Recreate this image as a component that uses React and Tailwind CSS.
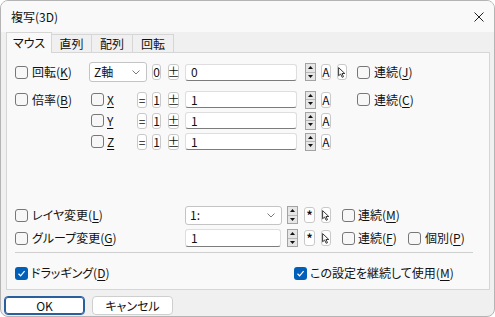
import React from 'react';

const font = "font-['Noto_Sans_CJK_JP','Noto_Sans',sans-serif] [font-feature-settings:'palt']";

function Check({ checked }) {
  if (checked) {
    return (
      <span className="w-[13px] h-[13px] shrink-0 rounded-[3px] bg-[#005fb8] flex items-center justify-center">
        <svg width="9" height="9" viewBox="0 0 9 9">
          <path d="M1.5 4.8 L3.6 6.8 L7.6 2.2" fill="none" stroke="white" strokeWidth="1.2" />
        </svg>
      </span>
    );
  }
  return <span className="w-[13px] h-[13px] shrink-0 rounded-[3px] border border-[#777777] bg-[#f7f7f7]" />;
}

function Label({ text, k }) {
  return (
    <span className="whitespace-nowrap leading-[14px]">
      {text}
      {k && (
        <>
          (<u className="underline underline-offset-2 decoration-1">{k}</u>)
        </>
      )}
    </span>
  );
}

function CheckLabel({ checked, text, k, gap = 'gap-[4px]', className = '' }) {
  return (
    <div className={`flex items-center ${gap} ${className}`}>
      <Check checked={checked} />
      <Label text={text} k={k} />
    </div>
  );
}

function Mini({ children, className = '' }) {
  return (
    <div className={`h-[16px] shrink-0 rounded-[3px] border border-[#c9c9c9] bg-white flex items-center justify-center text-[12px] leading-none ${className}`}>
      {children}
    </div>
  );
}

function Spin({ className = '' }) {
  return (
    <div className={`w-[11px] h-[18px] shrink-0 flex flex-col border border-[#a3a3a3] bg-[#e6e6e6] ${className}`}>
      <div className="flex-1 flex items-center justify-center border-b border-[#b8b8b8]">
        <svg width="5" height="3" viewBox="0 0 5 3"><path d="M0 3 L2.5 0 L5 3 Z" fill="#111" /></svg>
      </div>
      <div className="flex-1 flex items-center justify-center">
        <svg width="5" height="3" viewBox="0 0 5 3"><path d="M0 0 L2.5 3 L5 0 Z" fill="#111" /></svg>
      </div>
    </div>
  );
}

function Pointer({ className = '' }) {
  return (
    <div className={`w-[10px] h-[16px] shrink-0 rounded-[3px] border border-[#c9c9c9] bg-white flex items-center justify-center ${className}`}>
      <svg width="8" height="11" viewBox="0 0 8 11">
        <path d="M0.6 0.6 L0.6 8.8 L2.6 7 L4.2 10.3 L5.5 9.7 L4 6.5 L6.8 6.5 Z" fill="white" stroke="#222" strokeWidth="0.9" strokeLinejoin="round" />
      </svg>
    </div>
  );
}

function TextBox({ value, className = '' }) {
  return (
    <div className={`h-[17px] shrink-0 bg-white rounded-[3px] border border-[#dedede] border-b-[#7c7c7c] flex items-center pl-[5px] text-[12px] leading-none ${className}`}>
      {value}
    </div>
  );
}

function Combo({ value, className = '' }) {
  return (
    <div className={`shrink-0 bg-white rounded-[3px] border border-[#c4c4c4] flex items-center justify-between pl-[4px] pr-[6px] leading-none ${className}`}>
      <span>{value}</span>
      <svg width="8" height="5" viewBox="0 0 8 5"><path d="M0.5 0.5 L4 4 L7.5 0.5" fill="none" stroke="#6b6b6b" strokeWidth="0.9" /></svg>
    </div>
  );
}

function AxisRow({ first, axis }) {
  return (
    <div className="flex items-center h-[21px]">
      <div className="w-[76px] shrink-0">
        {first && <CheckLabel text="倍率" k="B" />}
      </div>
      <div className="w-[46px] shrink-0 flex items-center gap-[3px]">
        <Check />
        <u className="underline underline-offset-2 decoration-1 leading-[14px]">{axis}</u>
      </div>
      <Mini className="w-[10px]">=</Mini>
      <Mini className="w-[9px] ml-[5px]">1</Mini>
      <Mini className="w-[11px] ml-[7px]">±</Mini>
      <TextBox value="1" className="w-[112px] ml-[6px]" />
      <Spin className="ml-[8px]" />
      <Mini className="w-[10px] ml-[5px]">A</Mini>
      {first && <CheckLabel text="連続" k="C" className="ml-[26px]" />}
    </div>
  );
}

export default function App() {
  return (
    <div className={`w-[495px] h-[317px] bg-[#f0f0f0] border border-[#b4b4b4] rounded-[8px] overflow-hidden text-[12px] text-[#111] ${font}`}>
      {/* title bar */}
      <div className="h-[31px] bg-[#f9f9f9] flex items-center justify-between pl-[10px] pr-[10px]">
        <span className="text-[12px]">複写(3D)</span>
        <svg width="10" height="10" viewBox="0 0 10 10">
          <path d="M0.5 0.5 L9.5 9.5 M9.5 0.5 L0.5 9.5" stroke="#222" strokeWidth="1" />
        </svg>
      </div>

      {/* tabs */}
      <div className="h-[20px] flex items-end ml-[5px]">
        <div className="relative z-10 -mb-px h-[21px] w-[46px] bg-[#f9f9f9] border border-b-0 border-[#d6d6d6] flex items-center justify-center">マウス</div>
        <div className="h-[18px] w-[40px] border-t border-r border-[#d6d6d6] flex items-center justify-center">直列</div>
        <div className="h-[18px] w-[41px] border-t border-r border-[#d6d6d6] flex items-center justify-center">配列</div>
        <div className="h-[18px] w-[41px] border-t border-r border-[#d6d6d6] flex items-center justify-center">回転</div>
      </div>

      {/* panel */}
      <div className="ml-[5px] w-[484px] h-[238px] border border-[#d6d6d6] bg-[#f9f9f9] pl-[8px] pt-[9px]">
        <div className="flex items-center h-[20px]">
          <CheckLabel text="回転" k="K" className="w-[74px] shrink-0" />
          <Combo value="Z軸" className="w-[58px] h-[20px]" />
          <Mini className="w-[9px] ml-[5px]">0</Mini>
          <Mini className="w-[11px] ml-[7px]">±</Mini>
          <TextBox value="0" className="w-[112px] ml-[6px]" />
          <Spin className="ml-[8px]" />
          <Mini className="w-[10px] ml-[5px]">A</Mini>
          <Pointer className="ml-[6px]" />
          <CheckLabel text="連続" k="J" className="ml-[10px]" />
        </div>

        <div className="mt-[7px]">
          <AxisRow first axis="X" />
          <AxisRow axis="Y" />
          <AxisRow axis="Z" />
        </div>

        <div className="flex items-center h-[20px] mt-[53px]">
          <CheckLabel text="レイヤ変更" k="L" className="w-[170px] shrink-0" />
          <Combo value="1:" className="w-[97px] h-[19px]" />
          <Spin className="ml-[5px]" />
          <Mini className="w-[11px] ml-[6px] font-bold">*</Mini>
          <Pointer className="ml-[6px]" />
          <CheckLabel text="連続" k="M" gap="gap-[3px]" className="ml-[11px]" />
        </div>

        <div className="flex items-center h-[20px] mt-[3px]">
          <CheckLabel text="グループ変更" k="G" className="w-[170px] shrink-0" />
          <TextBox value="1" className="w-[96px] h-[18px]" />
          <Spin className="ml-[6px]" />
          <Mini className="w-[11px] ml-[6px] font-bold">*</Mini>
          <Pointer className="ml-[6px]" />
          <CheckLabel text="連続" k="F" gap="gap-[3px]" className="ml-[11px] w-[66px] shrink-0" />
          <CheckLabel text="個別" k="P" />
        </div>

        <div className="mt-[4px] w-[458px] h-px bg-[#cfcfcf]" />

        <div className="flex items-center h-[20px] mt-[10px]">
          <CheckLabel checked text="ドラッギング" k="D" gap="gap-[3px]" className="w-[279px] shrink-0" />
          <CheckLabel checked text="この設定を継続して使用" k="M" gap="gap-[3px]" />
        </div>
      </div>

      {/* buttons */}
      <div className="flex items-center gap-[7px] ml-[3px] mt-[6px]">
        <button className="w-[81px] h-[19px] bg-white rounded-[4px] border border-[#2a5f9e] shadow-[inset_0_0_0_1px_#2a5f9e] flex items-center justify-center leading-none font-normal">OK</button>
        <button className="w-[81px] h-[19px] bg-white rounded-[4px] border border-[#cfcfcf] flex items-center justify-center leading-none">キャンセル</button>
      </div>
    </div>
  );
}
